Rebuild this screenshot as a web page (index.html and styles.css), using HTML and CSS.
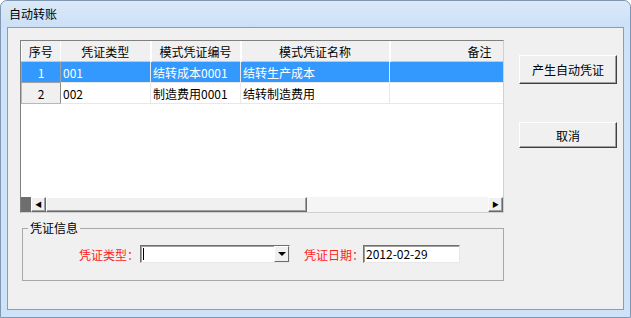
FILE: index.html
```html
<!DOCTYPE html>
<html lang="zh-CN">
<head>
    <meta charset="UTF-8">
    <title>自动转账</title>
    <link rel="stylesheet" href="styles.css">
</head>
<body>
    <div class="window">
        <div class="titlebar">自动转账</div>
        <div class="content">
            <div class="left">
                <div class="grid">
                    <div class="grid-body">
                        <table class="rows">
                            <colgroup>
                                <col class="c-num"><col class="c-type"><col class="c-code"><col class="c-name"><col class="c-note">
                            </colgroup>
                            <thead>
                                <tr>
                                    <th>序号</th>
                                    <th>凭证类型</th>
                                    <th>模式凭证编号</th>
                                    <th>模式凭证名称</th>
                                    <th class="note">备注</th>
                                </tr>
                            </thead>
                            <tbody>
                                <tr class="selected">
                                    <td class="num">1</td>
                                    <td>001</td>
                                    <td>结转成本0001</td>
                                    <td>结转生产成本</td>
                                    <td></td>
                                </tr>
                                <tr>
                                    <td class="num">2</td>
                                    <td>002</td>
                                    <td>制造费用0001</td>
                                    <td>结转制造费用</td>
                                    <td></td>
                                </tr>
                            </tbody>
                        </table>
                    </div>
                    <div class="hscroll">
                        <div class="sb-corner"></div>
                        <div class="sb-btn">&#9664;</div>
                        <div class="sb-thumb"></div>
                        <div class="sb-track"></div>
                        <div class="sb-btn">&#9654;</div>
                    </div>
                </div>

                <fieldset class="group">
                    <legend>凭证信息</legend>
                    <div class="fields">
                        <label class="lbl">凭证类型：</label>
                        <div class="combo">
                            <span class="caret"></span>
                            <span class="drop"><span class="tri"></span></span>
                        </div>
                        <label class="lbl lbl-date">凭证日期：</label>
                        <div class="textbox">2012-02-29</div>
                    </div>
                </fieldset>
            </div>

            <div class="right">
                <button class="btn btn-make">产生自动凭证</button>
                <button class="btn btn-cancel">取消</button>
            </div>
        </div>
    </div>
</body>
</html>
```

FILE: styles.css
```css
body {
    margin: 0;
    font-family: "Noto Sans CJK SC", "DejaVu Sans", sans-serif;
    font-size: 12px;
    color: #000;
    background: #fff;
}
.window {
    width: 631px;
    height: 318px;
    box-sizing: border-box;
    background: #cfe3f8;
    border: 1px solid #7f97b2;
    border-radius: 7px 7px 0 0;
    padding: 0 6px 7px 6px;
    display: flex;
    flex-direction: column;
}
.titlebar {
    height: 26px;
    line-height: 26px;
    background: linear-gradient(#dbe9f8, #cbe0f6);
    margin: 0 -6px;
    padding-left: 8px;
    border-radius: 7px 7px 0 0;
}
.content {
    flex: 1;
    background: #f0f0f0;
    border: 1px solid #8a9db3;
    display: flex;
    padding: 12px 0 0 12px;
}
.left {
    width: 484px;
}
.grid {
    height: 173px;
    box-sizing: border-box;
    border: 1px solid #808080;
    border-right-color: #d0d0d0;
    border-bottom-color: #d0d0d0;
    background: #fff;
    display: flex;
    flex-direction: column;
    overflow: hidden;
}
.grid-body {
    flex: 1;
    overflow: hidden;
}
.rows {
    border-collapse: collapse;
    table-layout: fixed;
    width: 482px;
}
.c-num { width: 39px; }
.c-type { width: 90px; }
.c-code { width: 90px; }
.c-name { width: 149px; }
.c-note { width: 114px; }
.rows th {
    height: 20px;
    font-weight: normal;
    background: #f0f0f0;
    border-right: 2px solid #fff;
    border-bottom: 1px solid #c8c8c8;
    padding: 0;
    text-align: center;
    vertical-align: middle;
}
.rows th:first-child {
    border-right: 1px solid #fff;
}
.rows th.note {
    text-align: right;
    padding-right: 12px;
    border-right: none;
}
.rows td {
    height: 20px;
    padding: 0 0 0 2px;
    border-right: 1px solid #e8e8e8;
    border-bottom: 1px solid #e8e8e8;
    white-space: nowrap;
    overflow: hidden;
}
.rows td.num {
    text-align: center;
    padding: 0;
    background: #f0f0f0;
    border: 1px solid #b8b8b8;
    border-right-color: #8c8c8c;
}
.rows tr.selected td {
    background: #3399ff;
    color: #fff;
}
.rows tr.selected td.num {
    background: #3399ff;
    border-color: #a0a0a0;
}
.hscroll {
    height: 15px;
    display: flex;
    flex-shrink: 0;
}
.sb-corner {
    width: 10px;
    background: #6e6e6e;
}
.sb-btn, .sb-thumb {
    box-sizing: border-box;
    background: #f0f0f0;
    border: 1px solid;
    border-color: #fff #6a6a6a #6a6a6a #fff;
    box-shadow: inset -1px -1px #a0a0a0;
}
.sb-btn {
    width: 15px;
    font-size: 7px;
    line-height: 13px;
    text-align: center;
}
.sb-thumb {
    width: 261px;
}
.sb-track {
    flex: 1;
    background: #f5f5f5;
}
.group {
    margin: 8px 0 0 2px;
    width: 482px;
    height: 60px;
    box-sizing: border-box;
    border: 1px solid #a8a8a8;
    padding: 0 0 0 5px;
}
.group legend {
    padding: 0 2px;
    line-height: 14px;
}
.fields {
    display: flex;
    align-items: center;
    margin-top: 10px;
    padding-left: 51px;
}
.lbl {
    color: #ff2020;
    width: 61px;
    flex-shrink: 0;
    white-space: nowrap;
}
.lbl-date {
    margin-left: 14px;
    width: 59px;
}
.combo, .textbox {
    height: 18px;
    flex-shrink: 0;
    box-sizing: border-box;
    background: #fff;
    border: 1px solid;
    border-color: #707070 #e8e8e8 #e8e8e8 #707070;
    box-shadow: inset 1px 1px #a0a0a0;
}
.combo {
    width: 150px;
    display: flex;
    align-items: stretch;
    justify-content: space-between;
}
.caret {
    width: 1px;
    margin: 2px 0 2px 2px;
    background: #000;
}
.drop {
    width: 15px;
    box-sizing: border-box;
    background: #f0f0f0;
    border: 1px solid;
    border-color: #fff #6a6a6a #6a6a6a #fff;
    display: flex;
    align-items: center;
    justify-content: center;
}
.tri {
    width: 0;
    height: 0;
    border-left: 4px solid transparent;
    border-right: 4px solid transparent;
    border-top: 4px solid #000;
}
.textbox {
    width: 97px;
    line-height: 16px;
    padding-left: 2px;
}
.right {
    margin-left: 15px;
    padding-top: 15px;
    display: flex;
    flex-direction: column;
    align-items: flex-start;
}
.btn {
    width: 98px;
    font-family: inherit;
    font-size: 12px;
    background: #f0f0f0;
    border: 1px solid;
    border-color: #fff #404040 #404040 #fff;
    box-shadow: inset -1px -1px #a0a0a0;
    padding: 0;
}
.btn-make {
    height: 29px;
}
.btn-cancel {
    height: 26px;
    margin-top: 38px;
}
```
